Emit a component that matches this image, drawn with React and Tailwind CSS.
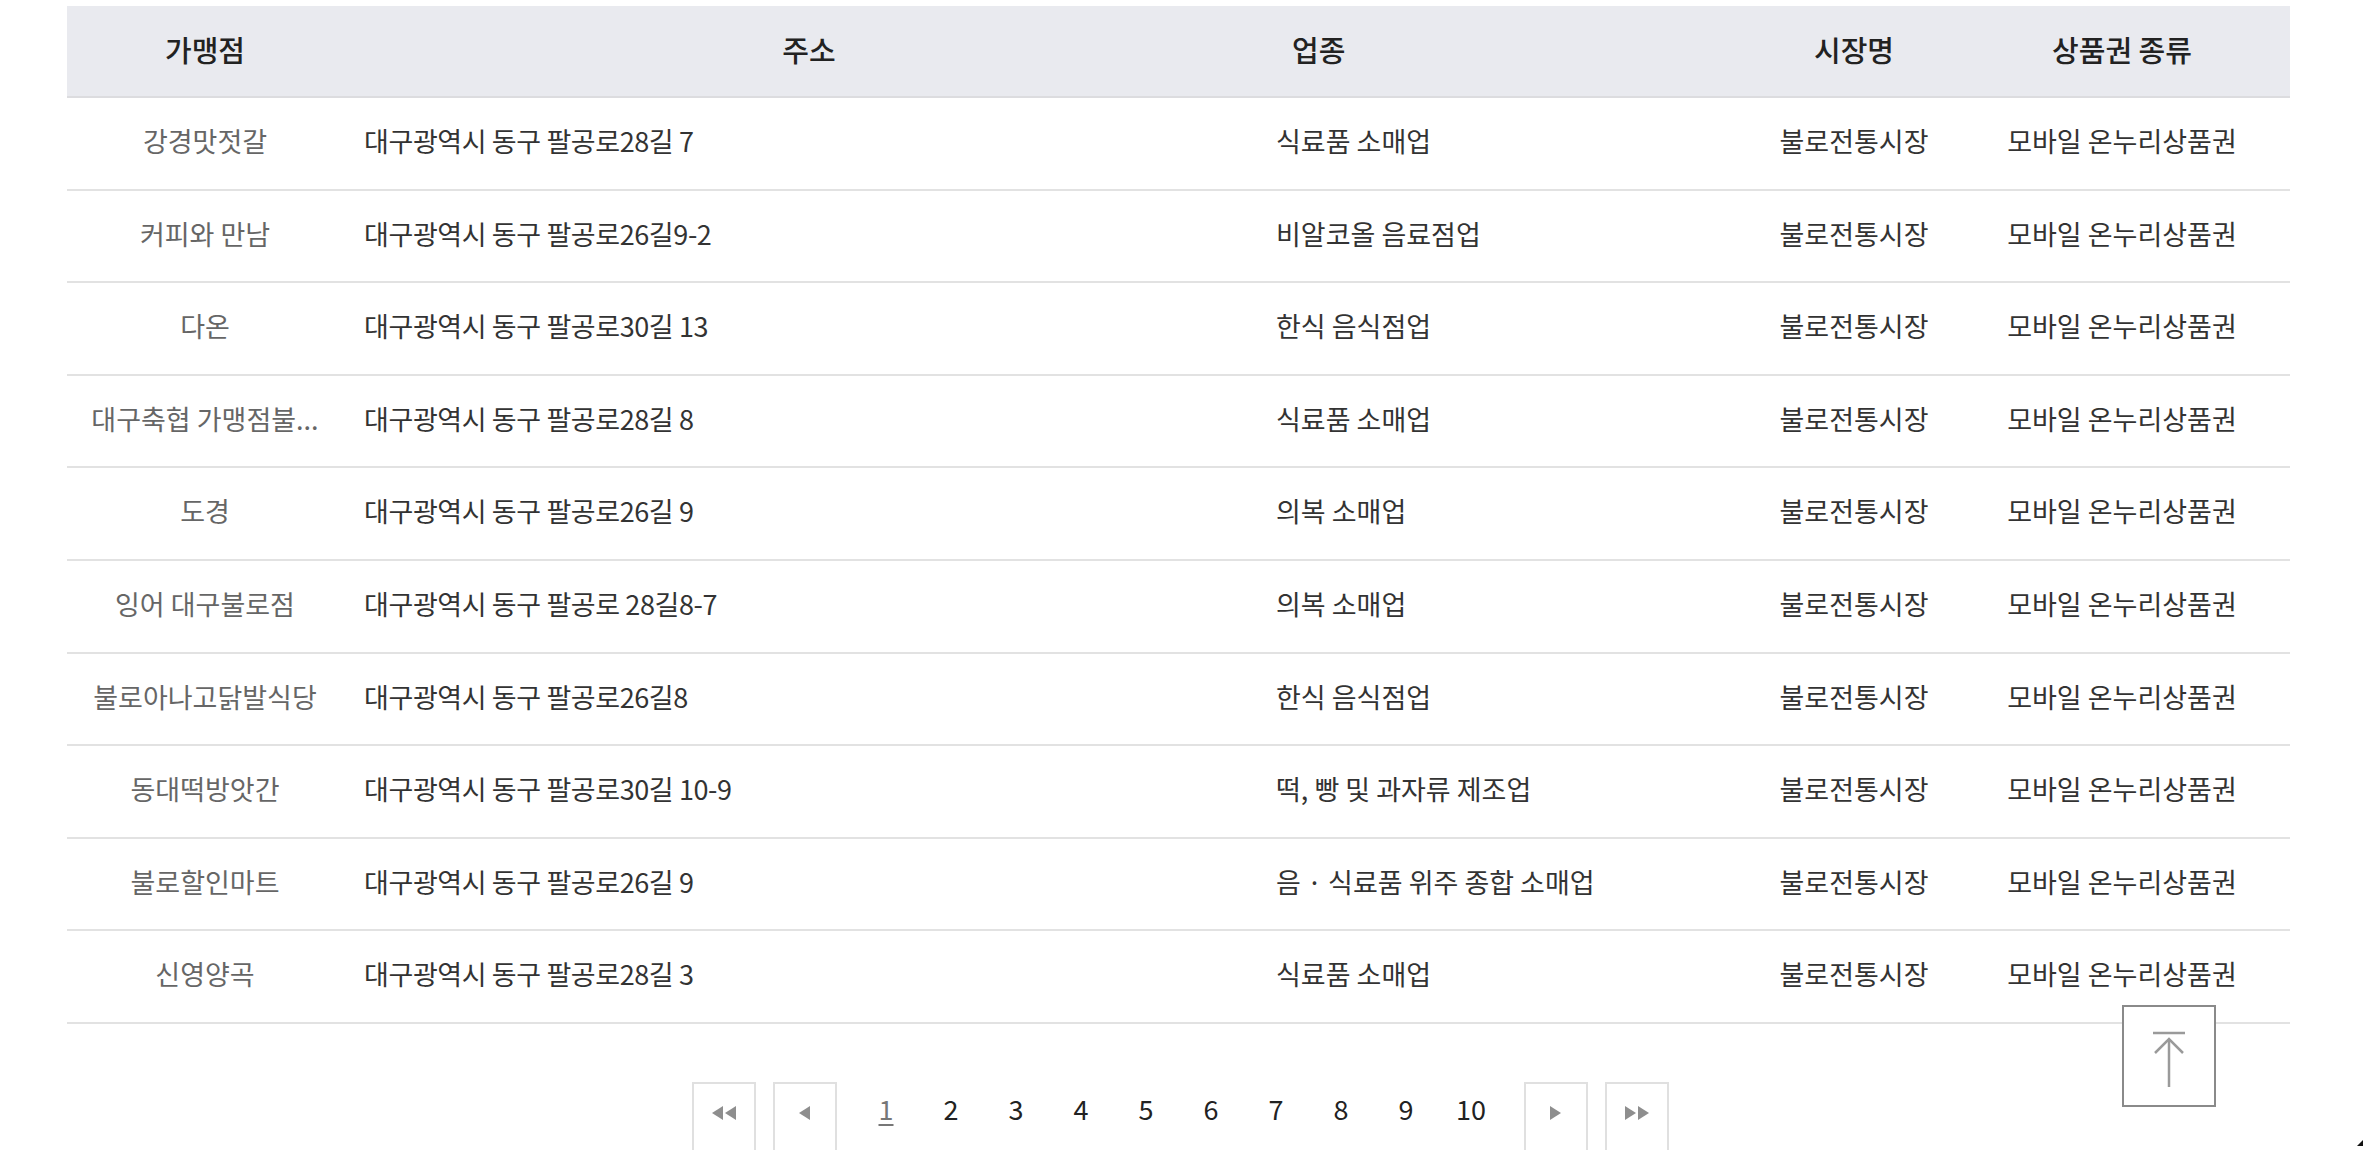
import React from 'react';

const rows = [
  { name: '강경맛젓갈', addr: '대구광역시 동구 팔공로28길 7', type: '식료품 소매업' },
  { name: '커피와 만남', addr: '대구광역시 동구 팔공로26길9-2', type: '비알코올 음료점업' },
  { name: '다온', addr: '대구광역시 동구 팔공로30길 13', type: '한식 음식점업' },
  { name: '대구축협 가맹점불...', addr: '대구광역시 동구 팔공로28길 8', type: '식료품 소매업' },
  { name: '도경', addr: '대구광역시 동구 팔공로26길 9', type: '의복 소매업' },
  { name: '잉어 대구불로점', addr: '대구광역시 동구 팔공로 28길8-7', type: '의복 소매업' },
  { name: '불로아나고닭발식당', addr: '대구광역시 동구 팔공로26길8', type: '한식 음식점업' },
  { name: '동대떡방앗간', addr: '대구광역시 동구 팔공로30길 10-9', type: '떡, 빵 및 과자류 제조업' },
  { name: '불로할인마트', addr: '대구광역시 동구 팔공로26길 9', type: '음 · 식료품 위주 종합 소매업' },
  { name: '신영양곡', addr: '대구광역시 동구 팔공로28길 3', type: '식료품 소매업' },
];

const gridCols = 'grid grid-cols-[276px_932px_479px_200px_336px]';

const PageButton = ({ children }) => (
  <button className="w-[64px] h-[72px] border-2 border-[#e0e0e0] bg-white flex items-start justify-center pt-[22px]">
    {children}
  </button>
);

const Tri = ({ dir }) => (
  <svg width="13" height="14" viewBox="0 0 13 14">
    {dir === 'left' ? (
      <path d="M12 0 L12 14 L1 7 Z" fill="#8e8e8e" />
    ) : (
      <path d="M1 0 L1 14 L12 7 Z" fill="#8e8e8e" />
    )}
  </svg>
);

export default function App() {
  return (
    <div
      className="relative w-full h-[1150px] overflow-hidden bg-white"
      style={{ fontFamily: '"Noto Sans CJK KR", "Noto Sans", sans-serif' }}
    >
      <div className="pt-[6px] pl-[67px]">
        <div className="w-[2223px]">
          {/* 헤더 */}
          <div className={`${gridCols} h-[92px] pb-[2px] bg-[#e9eaef] border-b-2 border-[#dcdcdf] items-center text-[29px] font-medium text-[#222]`}>
            <div className="text-center">가맹점</div>
            <div className="text-center">주소</div>
            <div className="pl-[17px]">업종</div>
            <div className="text-center">시장명</div>
            <div className="text-center">상품권 종류</div>
          </div>

          {rows.map((r, i) => (
            <div
              key={i}
              className={`${gridCols} h-[92.6px] pb-[4px] border-b-2 border-[#e2e2e2] items-center text-[27px] text-[#333]`}
            >
              <div className="text-center whitespace-nowrap text-[#666]">{r.name}</div>
              <div className="pl-[21px] tracking-[-0.4px]">{r.addr}</div>
              <div className="pl-[1px]">{r.type}</div>
              <div className="text-center">불로전통시장</div>
              <div className="text-center">모바일 온누리상품권</div>
            </div>
          ))}

          {/* 페이지네이션 */}
          <div className="mt-[58px] pl-[3px] flex justify-center items-start gap-[17px]">
            <PageButton>
              <span className="flex">
                <Tri dir="left" />
                <Tri dir="left" />
              </span>
            </PageButton>
            <PageButton>
              <Tri dir="left" />
            </PageButton>
            <div className="flex mr-[3px]">
              {[1, 2, 3, 4, 5, 6, 7, 8, 9, 10].map((n) => (
                <a
                  key={n}
                  className={`w-[65px] h-[54px] flex items-center justify-center text-[27px] ${
                    n === 1 ? 'text-[#777] underline underline-offset-4' : 'text-[#222]'
                  }`}
                >
                  {n}
                </a>
              ))}
            </div>
            <PageButton>
              <Tri dir="right" />
            </PageButton>
            <PageButton>
              <span className="flex">
                <Tri dir="right" />
                <Tri dir="right" />
              </span>
            </PageButton>
          </div>
        </div>
      </div>

      {/* 맨 위로 */}
      <button className="absolute left-[2122px] top-[1005px] w-[94px] h-[102px] bg-white border-2 border-[#8a8a8a] flex items-start justify-center pt-[24px]">
        <svg width="36" height="60" viewBox="0 0 36 60" fill="none" stroke="#9a9a9a" strokeWidth="2.5">
          <path d="M2 2 H34" />
          <path d="M18 8 V56" />
          <path d="M4 22 L18 8 L32 22" />
        </svg>
      </button>

      <svg className="absolute right-[5px] bottom-[4px]" width="6" height="6" viewBox="0 0 6 6">
        <path d="M6 0 L6 6 L0 6 Z" fill="#111" />
      </svg>
    </div>
  );
}
